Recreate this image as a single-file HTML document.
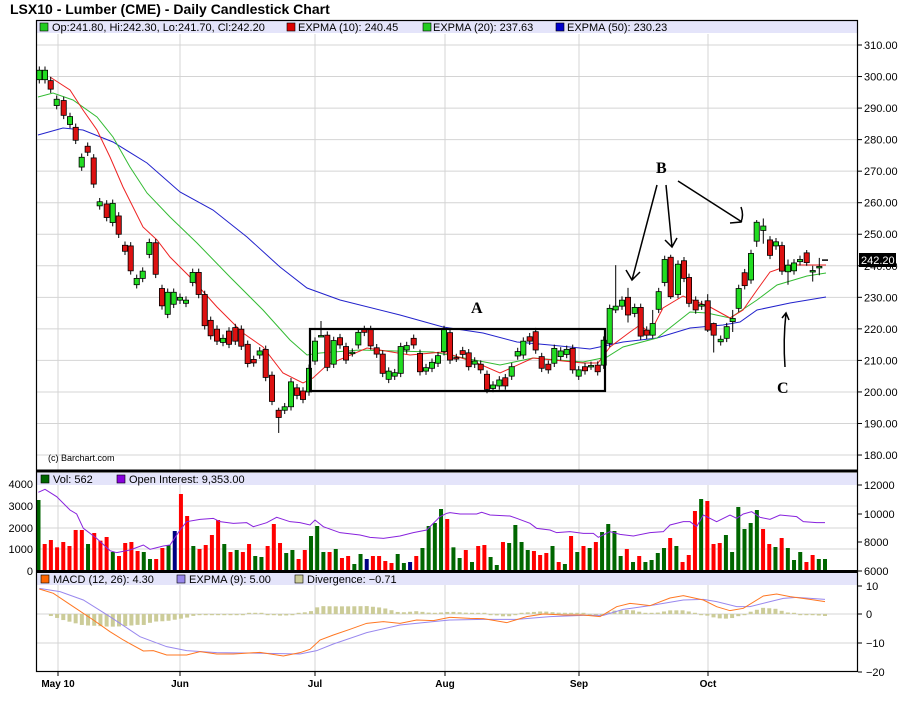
<!DOCTYPE html>
<html><head><meta charset="utf-8"><style>
body{margin:0;background:#fff;width:900px;height:713px;overflow:hidden}
svg{display:block}
text{font-family:"Liberation Sans",sans-serif;font-size:11px;fill:#000}
.b{font-weight:bold}
</style></head><body>
<svg id="s" width="900" height="713" viewBox="0 0 900 713" xmlns="http://www.w3.org/2000/svg">
<rect width="900" height="713" fill="#fff"/>
<text x="10" y="14" class="b" style="font-size:14px">LSX10 - Lumber (CME) - Daily Candlestick Chart</text>
<g id="grid" stroke="#d4d4d4" stroke-width="1"></g>
<rect x="36.5" y="21" width="821" height="12" fill="#e4e4fa"/>
<rect x="36.5" y="473" width="821" height="12" fill="#e4e4fa"/>
<rect x="36.5" y="573" width="821" height="12" fill="#e4e4fa"/>
<g id="lines" fill="none" stroke-width="1"></g>
<g id="cndl"></g>
<g id="vol"></g>
<g id="hist" fill="#cccc99"></g>
<g id="osc" fill="none" stroke-width="1"></g>
<!-- frames -->
<g fill="none" stroke="#000">
<rect x="36.5" y="20.5" width="821" height="651" stroke-width="1.2"/>
<line x1="36" y1="471" x2="858" y2="471" stroke-width="3"/>
<line x1="36" y1="571.5" x2="858" y2="571.5" stroke-width="3"/>
</g>
<g id="ticks" stroke="#000"></g>
<g id="labels"></g>
<!-- legends -->
<rect x="40" y="23" width="8" height="8" fill="#22cc22" stroke="#000" stroke-width=".6"/>
<text x="52" y="31">Op:241.80, Hi:242.30, Lo:241.70, Cl:242.20</text>
<rect x="287" y="23" width="8" height="8" fill="#dd0000" stroke="#000" stroke-width=".6"/>
<text x="298" y="31">EXPMA (10): 240.45</text>
<rect x="423" y="23" width="8" height="8" fill="#22cc22" stroke="#000" stroke-width=".6"/>
<text x="433" y="31">EXPMA (20): 237.63</text>
<rect x="556" y="23" width="8" height="8" fill="#0000cc" stroke="#000" stroke-width=".6"/>
<text x="567" y="31">EXPMA (50): 230.23</text>
<rect x="41" y="475" width="8" height="8" fill="#006600" stroke="#000" stroke-width=".6"/>
<text x="53" y="483">Vol: 562</text>
<rect x="117" y="475" width="8" height="8" fill="#8800dd" stroke="#000" stroke-width=".6"/>
<text x="129" y="483">Open Interest: 9,353.00</text>
<rect x="41" y="575" width="8" height="8" fill="#ff6600" stroke="#000" stroke-width=".6"/>
<text x="53" y="583">MACD (12, 26): 4.30</text>
<rect x="177" y="575" width="8" height="8" fill="#9988ee" stroke="#000" stroke-width=".6"/>
<text x="189" y="583">EXPMA (9): 5.00</text>
<rect x="295" y="575" width="8" height="8" fill="#cccc99" stroke="#000" stroke-width=".6"/>
<text x="307" y="583">Divergence: −0.71</text>
<text x="48" y="461" style="font-size:9px">(c) Barchart.com</text>
<rect x="859" y="253" width="37" height="14" fill="#000"/>
<text x="861" y="264" style="fill:#fff">242.20</text>
<!-- annotations -->
<rect x="310" y="329" width="295" height="62" fill="none" stroke="#000" stroke-width="2.2"/>
<text x="471" y="313" class="b" style="font-family:'Liberation Serif',serif;font-size:16px">A</text>
<text x="656" y="173" class="b" style="font-family:'Liberation Serif',serif;font-size:16px">B</text>
<text x="777" y="393" class="b" style="font-family:'Liberation Serif',serif;font-size:16px">C</text>
<g fill="none" stroke="#000" stroke-width="1.5">
<path d="M657 185 L632 280 M626 270 L632 280 L640 272"/>
<path d="M666 185 L672 247 M665 240 L672 247 L677 238"/>
<path d="M678 181 L742 222 M741 207 Q744 215 741 222 L730 223"/>
<path d="M785 367 Q783 340 786 313 M782 318 L786 313 L789 320"/>
</g>
</svg>
<script>
var NS="http://www.w3.org/2000/svg";
function el(p,t,a,txt){var e=document.createElementNS(NS,t);for(var k in a)e.setAttribute(k,a[k]);if(txt!=null)e.textContent=txt;document.getElementById(p).appendChild(e);return e;}
function py(p){return 45+(310-p)*3.154;}
// grid
for(var p=180;p<=310;p+=10){var y=py(p);el("grid","line",{x1:37,y1:y,x2:858,y2:y});el("ticks","line",{x1:858,y1:y,x2:862,y2:y});el("labels","text",{x:864,y:y+4},p.toFixed(2));}
[58,180,315,445,579,708].forEach(function(x){el("grid","line",{x1:x,y1:34,x2:x,y2:471});el("grid","line",{x1:x,y1:485,x2:x,y2:571});el("grid","line",{x1:x,y1:585,x2:x,y2:672});el("ticks","line",{x1:x,y1:672,x2:x,y2:676});});
[["May 10",58],["Jun",180],["Jul",315],["Aug",445],["Sep",579],["Oct",708]].forEach(function(d){el("labels","text",{x:d[1],y:687,"text-anchor":"middle","class":"b",style:"font-size:10px"},d[0]);});
[[4000,484],[3000,506],[2000,528],[1000,549],[0,571]].forEach(function(v){el("grid","line",{x1:37,y1:v[1],x2:858,y2:v[1]});el("labels","text",{x:33,y:v[1]+4,"text-anchor":"end"},v[0]);});
[[12000,485],[10000,514],[8000,542],[6000,571]].forEach(function(v){el("ticks","line",{x1:858,y1:v[1],x2:862,y2:v[1]});el("labels","text",{x:864,y:v[1]+4},v[0]);});
[[10,586],[0,614],[-10,643],[-20,672]].forEach(function(v){if(v[0]==0||v[0]==-10)el("grid","line",{x1:37,y1:v[1],x2:858,y2:v[1]});el("ticks","line",{x1:858,y1:v[1],x2:862,y2:v[1]});el("labels","text",{x:866,y:v[1]+4},v[0]==-10?"−10":v[0]==-20?"−20":v[0]);});
// MAs
function pl(g,pts,c){el(g,"polyline",{points:pts.map(function(q){return q.join(",")}).join(" "),stroke:c});}
pl("lines",[[38,135],[63,128],[83,130],[113,142],[147,163],[180,192],[213,210],[247,237],[280,267],[307,288],[340,300],[400,315],[443,327],[483,333],[517,342],[550,345],[590,349],[623,342],[657,338],[690,328],[723,325],[740,322],[757,310],[790,303],[826,297]],"#2222cc");
pl("lines",[[38,97],[53,93],[73,100],[97,117],[113,137],[130,167],[147,193],[170,217],[197,243],[230,277],[263,310],[290,340],[307,355],[320,353],[360,350],[433,352],[500,365],[533,358],[583,362],[607,357],[623,347],[657,338],[690,312],[707,313],[730,318],[757,300],[777,285],[807,276],[826,273]],"#33bb33");
pl("lines",[[50,77],[70,90],[83,110],[97,130],[110,157],[123,187],[143,227],[157,240],[170,257],[190,277],[217,307],[243,333],[263,347],[283,373],[303,383],[313,378],[327,365],[367,348],[410,355],[443,352],[477,363],[500,373],[533,358],[583,363],[598,363],[610,347],[630,332],[640,325],[650,333],[663,308],[683,296],[697,302],[710,307],[730,318],[743,310],[757,290],[770,272],[790,265],[826,265]],"#ee2222");
// candles
var C=[[39.3,299,302],[45,299,302],[50.7,298.7,296],[56.7,290.8,292.8],[63.7,292.4,287.7],[70,284.8,287.3],[75.7,283.9,279.8],[81.7,271.3,274.4],[87.7,277.9,276],[93.7,274.2,265.9],[99.7,259,260.3],[106.7,259.6,255.3],[112.7,253.7,259.8],[118.7,255.8,250],[125,246.5,244.6],[130.7,246.3,238.4],[136.7,234,236],[142.7,236,238.3],[149.3,243.6,247.4],[155.7,247.3,237.3],[162,232.8,227.3],[167.7,224.6,231.6],[173.7,227.8,231.6],[180,229.1,230],[186,228.1,229.1],[192.7,234.7,237.9],[198.7,237.9,230.9],[204.7,230.9,221],[210.7,222.7,217.8],[217,219.9,216.1],[223,215.7,217],[229,219.3,215.1],[235.3,220.4,216.1],[241.3,219.9,214.5],[247.7,215.1,209],[253.7,210.3,209.2],[259.7,211.7,213],[265.7,213.5,204.6],[272,205.3,197],[278.7,194.2,191.9,195,187],[284.7,194.2,195.3],[291,195.3,203.2],[297,201.3,198.9],[303,200.3,197.6],[309,200,207.5],[315,209.8,216.1],[321,217.7,217.9,222.5,217.5],[327.3,218,207.8],
[333.7,208.8,216.3],[340,217.2,214.9],[346,214.4,210.1],[352.3,212.4,212.6],[358.3,214.9,218.9],[364.3,219.8,218.9],[370.7,219.8,214.6],[376.7,214,212],[382.7,212,205.9],[388.7,204,206.6],[394.7,205,206.1],[400.7,205.9,214.4],[406.7,213.3,214.7],[413.7,217,214.9],[420,212.2,206.4],[426,206.6,207.7],[432,207.5,209.4],[438,209.1,211.5],[444,212.8,219.8],[450,218.8,210.1],[456.3,210.9,210.7],[462.7,213.1,211.9],[468.7,212.4,208],[474.7,208.8,209.8],[480.7,208.8,207],[487,205.6,200.8],[493,201.1,202.2],[499.3,201.9,203.8],[505.3,204.5,201.9],[511.7,205,208],[517.7,211.4,212.8],[523.3,211.7,216.1],[529.7,217.5,216.1],[535.7,219.1,213.3],[541.7,211.2,207.5],[548.3,208.8,207],[554.3,209.1,213.8],[560.7,211.2,213],[566.7,211.9,213.5],[572.7,213.8,207],[578.7,205,207],[585,208,206.7],[591,208.2,208.4],[597.7,208.5,206.4],[603.7,208.5,216.4],[609.7,215.4,226.5],[615.7,226,227.2,240.2,225],
[622,227.2,229.1],[628,230,224.4,233,222],[634.7,224.9,226.8],[640.7,226.8,217.7],[646.7,219.6,218],[652.7,218,221.7,226,217],[658.7,226.2,231.8],[664.7,234.7,242],[670.7,242.7,230.2,243.5,229.5],[678,230.9,240.5],[684,241.6,236],[689,236.3,228.1],[695.7,229.1,226],[701.7,227.2,227.7],[707.7,228.9,219.6,231,219],[713.7,221.7,218,222,212.5],[720.7,215.9,216.7],[726.7,217,220.7],[732.7,222.3,223.3,226,219],[738.7,226.5,232.8],[744.7,237.8,233.7],[751,235.5,243.9],[756.7,247.8,253.8,254.5,246],[763.3,251.2,252.6,255,247],[770,248.2,243.3],[776,246.3,247.6],[782,246.4,238.3],[788,238.1,240.2,242,234],[794,238.4,240.9],[800,241.3,242],[806.7,244.1,241,245,240],[812.7,238.3,238.5,240,235],[819.3,239.6,239.8,242.5,237]];
C.forEach(function(c){var x=c[0],o=c[1],cl=c[2],mx=Math.max(o,cl),mn=Math.min(o,cl);var h=c[3]||mx+1.2,l=c[4]||mn-1.2;
el("cndl","line",{x1:x,y1:py(h),x2:x,y2:py(l),stroke:"#000","stroke-width":1});
var t=py(mx),b=py(mn);if(b-t<1.5){b=t+1.5;}
el("cndl","rect",{x:x-2.6,y:t,width:5.2,height:b-t,fill:cl>=o?"#22dd22":"#dd1111",stroke:"#000","stroke-width":0.8});});
el("cndl","line",{x1:822,y1:py(241.8),x2:828,y2:py(241.8),stroke:"#000","stroke-width":1.5});
// volume
var V="120g252r240r262r246r258r210r210r252g219r242r231r276g288r249r246r273r276g297g297r264r255g213n102r168r258g267r255r225r180r252g276r270g276r252r288g291g258r192r249r279g270g297r270r228g198g276g276r267g294r288r312g282g297n288r288r303r309r282g309g306n288r264g198g189g147g177r262g294g270r306g258r255r291g315g246r249g195g246g270g273r285r279r258g306r312g228r276g258r264g246r216g192g213g288g267r306g288r306g300g279g264g234r258g306r285r153r117g123r252r249r225g276g141g207g189g150g207r252r261g234r264g300g276g306r285r297g297g";
var m=V.match(/\d+[a-z]/g);var n=m.length;m.forEach(function(s,i){var Y=parseInt(s),c=s.slice(-1);var x=38.5+i*(825-38.5)/(n-1);var y=460+Y/3;
el("vol","rect",{x:x-2,y:y,width:4,height:571-y,fill:c=="g"?"#006600":c=="n"?"#000080":"#ff0000"});});
function cv(a,ox){return a.map(function(q){return [ox+q[0]/3,460+q[1]/3];});}
var oi=cv([[115,97],[135,88],[170,110],[210,150],[230,162],[250,205],[290,235],[330,272],[350,278],[390,270],[430,255],[450,268],[490,258],[510,255],[540,210],[560,185],[600,178],[640,175],[660,185],[700,190],[740,188],[760,200],[800,188],[830,172],[870,185],[900,188],[930,195],[945,180],[970,200],[1020,218],[1080,225],[1110,232],[1150,235],[1200,228],[1240,218],[1280,210],[1320,170],[1340,160]],0).concat(cv([[0,158],[30,162],[80,162],[95,157],[120,165],[180,168],[200,175],[240,190],[260,205],[300,210],[320,218],[360,215],[400,220],[430,220],[445,232],[480,215],[510,223],[550,228],[600,218],[640,215],[660,195],[700,185],[720,185],[740,200],[760,165],[800,185],[840,165],[860,175],[880,162],[905,155],[930,172],[960,178],[990,165],[1040,170],[1060,185],[1100,188],[1125,188]],450));
pl("osc",oi,"#8822dd");
var mac=cv([[118,387],[160,400],[220,440],[280,480],[330,515],[370,540],[430,573],[460,572],[500,585],[560,585],[600,575],[650,582],[700,582],[780,577],[850,588],[900,578],[930,568],[960,540],[1000,525],[1050,508],[1100,490],[1150,485],[1200,490],[1250,480],[1300,482],[1349,472]],0).concat(cv([[3,472],[60,475],[100,476],[170,488],[230,470],[280,462],[340,465],[400,465],[450,470],[500,440],[540,430],[600,437],[660,414],[700,407],[760,420],[800,440],[840,452],[880,445],[940,408],[980,402],[1020,410],[1080,418],[1125,425]],450));
var sig=cv([[118,385],[180,395],[250,420],[330,470],[420,530],[500,560],[560,572],[650,578],[800,580],[900,582],[950,572],[1000,552],[1100,518],[1200,495],[1300,485],[1349,480]],0).concat(cv([[3,480],[100,478],[200,478],[300,470],[400,466],[460,466],[520,448],[600,437],[700,420],[760,418],[800,425],[860,440],[900,440],[960,425],[1000,415],[1040,412],[1125,418]],450));
function ip(a,x){for(var i=1;i<a.length;i++){if(a[i][0]>=x){var t=(x-a[i-1][0])/(a[i][0]-a[i-1][0]);return a[i-1][1]+t*(a[i][1]-a[i-1][1]);}}return a[a.length-1][1];}
for(var i=0;i<n;i++){var x=38.5+i*(825-38.5)/(n-1);if(x<45)continue;var d=(ip(mac,x)-ip(sig,x))*0.85;var y0=614,y1=614+d;if(Math.abs(d)<1.2)y1=614+(d<0?-1.2:1.2);
el("hist","rect",{x:x-2,y:Math.min(y0,y1),width:4,height:Math.abs(y1-y0)});}
pl("osc",sig,"#9988ee");pl("osc",mac,"#ff7722");
</script>
</body></html>
